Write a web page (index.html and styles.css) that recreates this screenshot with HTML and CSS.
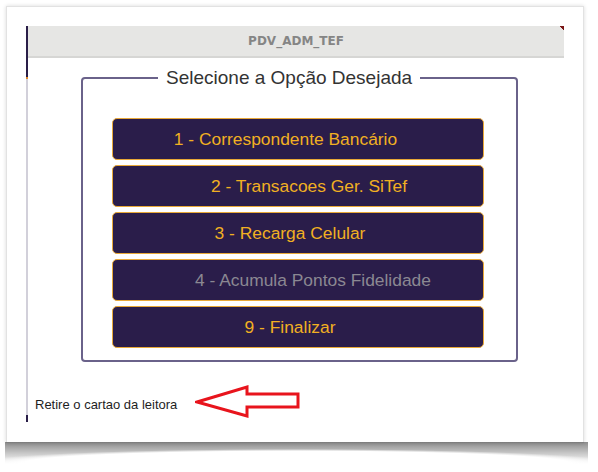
FILE: index.html
```html
<!DOCTYPE html>
<html>
  <head>
    <meta charset="utf-8">
    <title>PDV_ADM_TEF</title>
    <link rel="stylesheet" href="styles.css">
  </head>
  <body>
    <div class="sheet">
      <div class="window">
        <div class="titlebar">PDV_ADM_TEF</div>
        <fieldset class="menu">
          <legend>Selecione a Opção Desejada</legend>
          <div class="options">
            <button class="option shift-left-lg">1 - Correspondente Bancário</button>
            <button class="option shift-right">2 - Transacoes Ger. SiTef</button>
            <button class="option shift-left">3 - Recarga Celular</button>
            <button class="option shift-right-lg disabled">4 - Acumula Pontos Fidelidade</button>
            <button class="option shift-left">9 - Finalizar</button>
          </div>
        </fieldset>
        <div class="status">
          <span class="status-text">Retire o cartao da leitora</span>
          <svg class="arrow" width="106" height="33" viewBox="0 0 106 33">
            <polygon points="2,17 52,2 52,9 103,9 103,22 52,22 52,31" fill="#fff" stroke="#e8141c" stroke-width="3" stroke-linejoin="miter"/>
          </svg>
        </div>
      </div>
    </div>
  </body>
</html>
```

FILE: styles.css
```css
* {
  box-sizing: border-box;
}

body {
  margin: 0;
  padding: 6px 0 0 6px;
  height: 472px;
  background-color: #fff;
  font-family: "Liberation Sans", Arial, sans-serif;
}

/* paper card with the lifted shadow underneath */
.sheet {
  position: relative;
  width: 578px;
  height: 437px;
  padding: 19px 0 0 19px;
  background-color: #fff;
  border: 1px solid #e2e2e2;
  box-shadow: 0 0 4px rgba(0, 0, 0, 0.15);
}

.sheet::after {
  content: '';
  position: absolute;
  left: -2px;
  right: -5px;
  top: 100%;
  height: 22px;
  background:
    radial-gradient(ellipse 320px 14px at 50% 21px, #fff 85%, rgba(255, 255, 255, 0) 100%),
    linear-gradient(to bottom, rgba(0, 0, 0, 0.45), rgba(0, 0, 0, 0.2) 55%, rgba(0, 0, 0, 0));
}

.window {
  width: 538px;
  padding-bottom: 4px;
  border-left: 2px solid;
  border-image: linear-gradient(to bottom, #2a1e48 0 52px, #e0892a 52px 54px, #d2d0da 54px calc(100% - 8px), #2a1e48 calc(100% - 8px)) 1;
}

.titlebar {
  height: 32px;
  line-height: 30px;
  text-align: center;
  font-family: "DejaVu Sans", sans-serif;
  font-size: 12px;
  font-weight: bold;
  color: #858585;
  background: linear-gradient(225deg, #7a1616 0 3px, transparent 3px), #e6e6e4;
  border-bottom: 2px solid #d6d6d4;
}

.menu {
  margin: 9px 0 0 53px;
  width: 437px;
  padding: 0 0 12px 0;
  border: 2px solid #6a628a;
  border-radius: 4px;
}

.menu legend {
  margin-left: 75px;
  padding: 0 8px;
  font-size: 19px;
  line-height: 22px;
  color: #333;
}

.options {
  display: flex;
  flex-direction: column;
  gap: 5px;
  margin: 29px 0 0 29px;
  width: 372px;
}

.option {
  height: 42px;
  padding: 0;
  font-family: "Liberation Sans", Arial, sans-serif;
  font-size: 17.4px;
  color: #f1b022;
  background-color: #2a1d4a;
  border: 1.5px solid #e8a838;
  border-radius: 5px;
  text-align: center;
}

.option.disabled {
  color: #8b8892;
}

.shift-left-lg {
  padding-right: 25px;
}

.shift-left {
  padding-right: 16px;
}

.shift-right {
  padding-left: 22px;
}

.shift-right-lg {
  padding-left: 30px;
}

.status {
  display: flex;
  align-items: flex-end;
  gap: 18px;
  margin-top: 23px;
  padding-left: 7px;
}

.status-text {
  margin-bottom: 6px;
  font-size: 13px;
  line-height: 15px;
  color: #1e1e1e;
}

.arrow {
  display: block;
}
```
